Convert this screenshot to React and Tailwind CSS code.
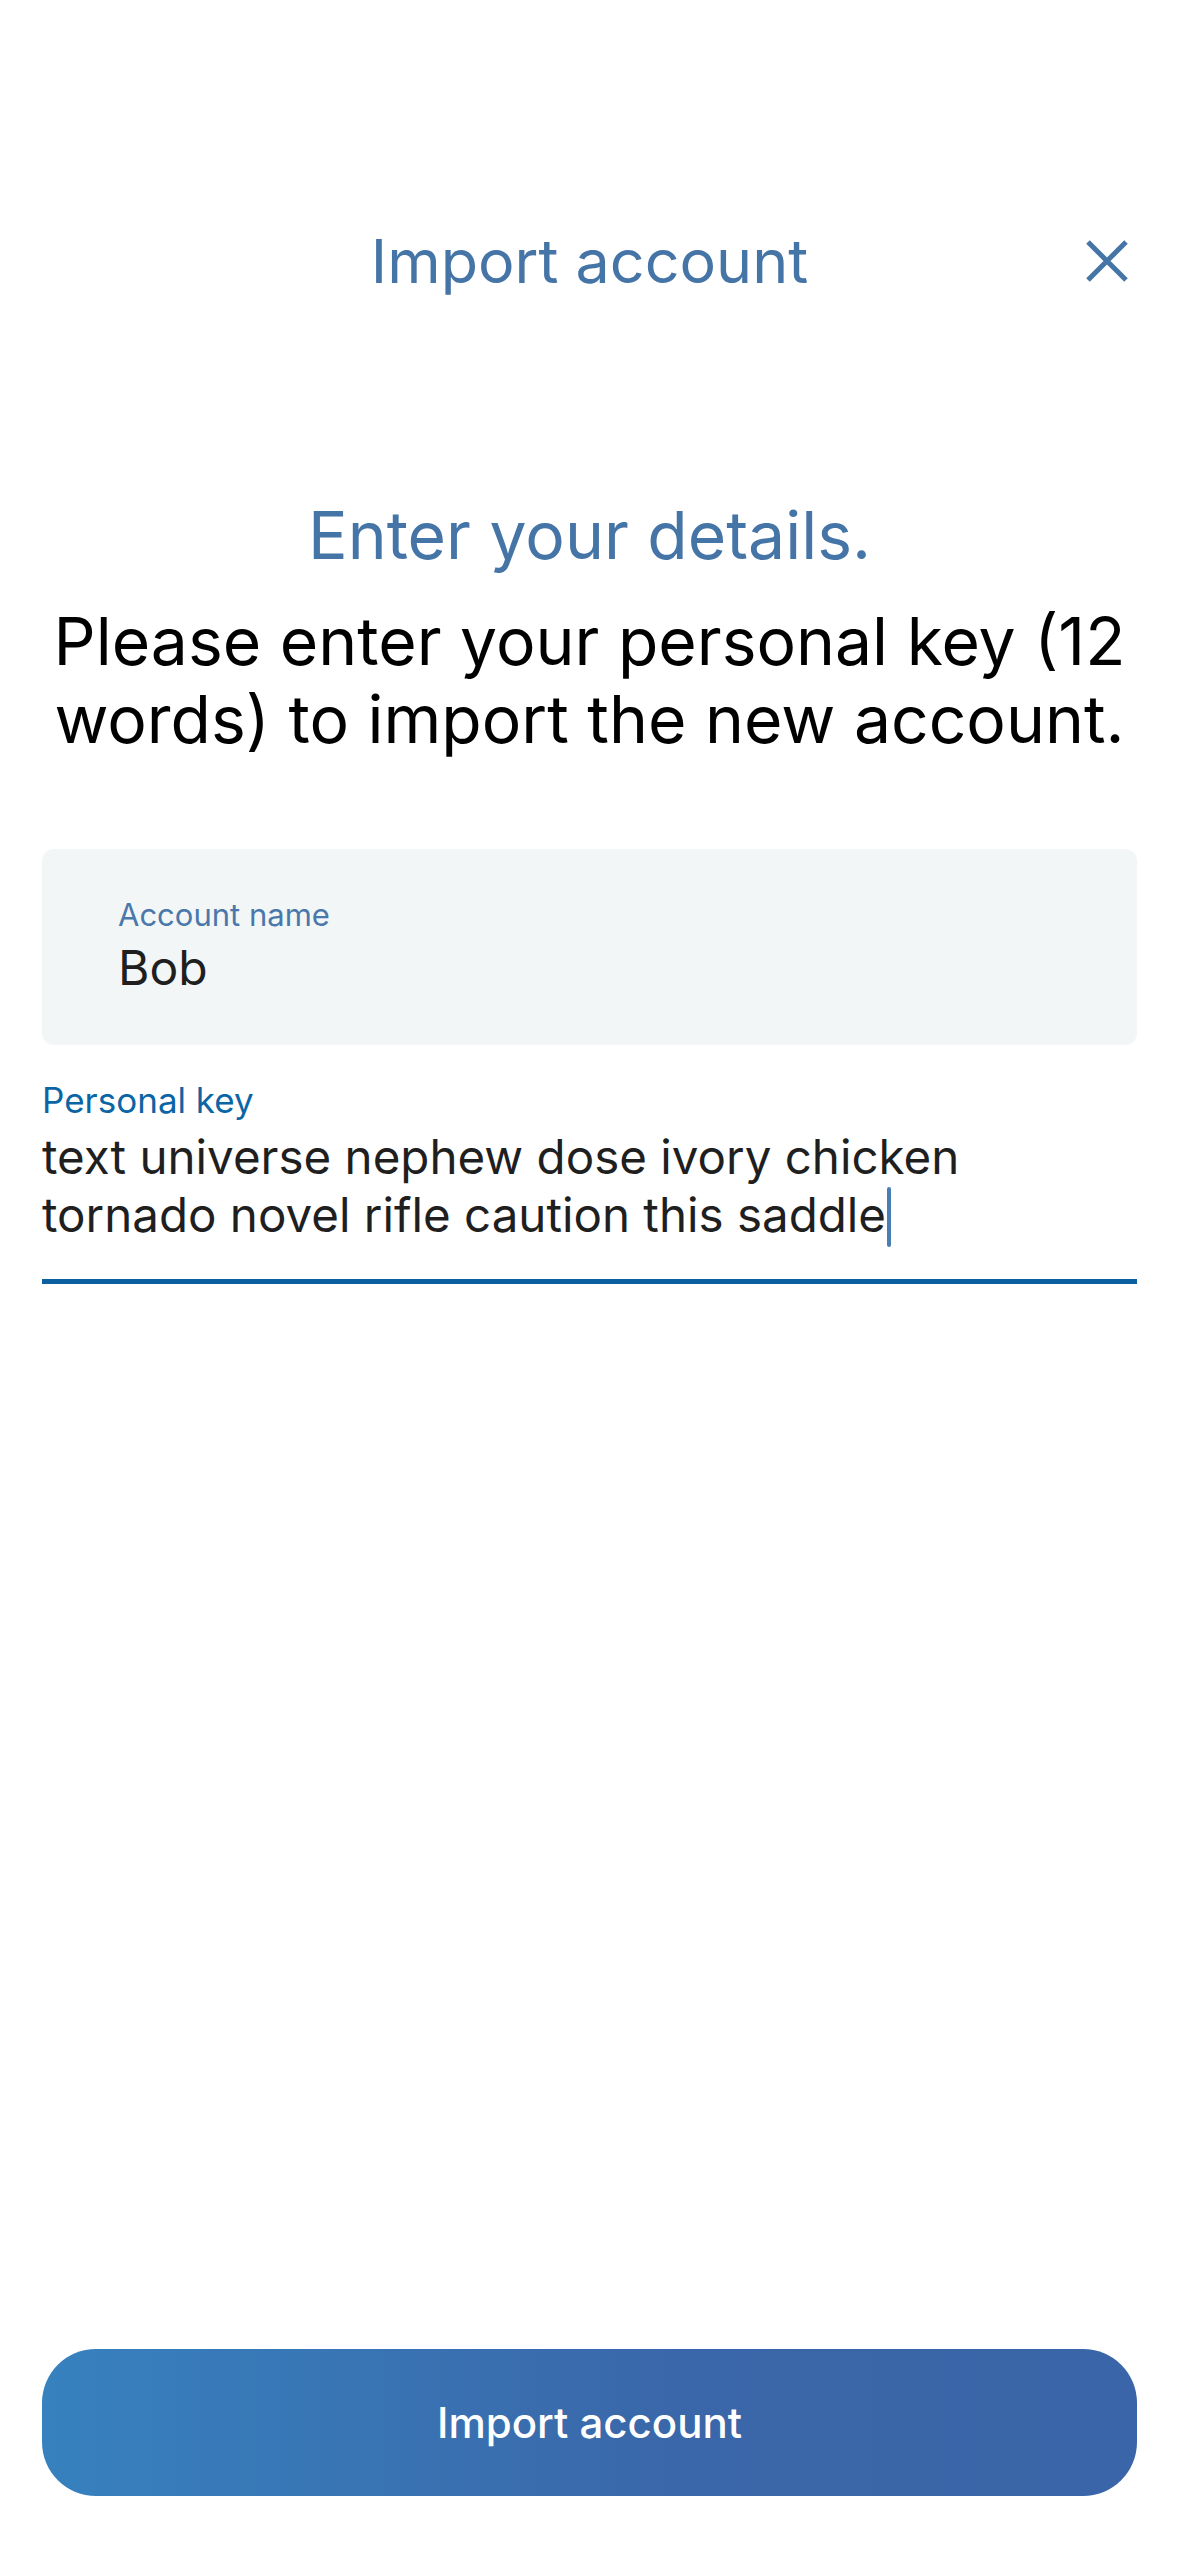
export default function App() {
  return (
    <div
      className="w-[1179px] h-[2556px] bg-white flex flex-col"
      style={{ fontFamily: "Inter, 'Noto Sans', sans-serif" }}
    >
      <div className="mt-[201px] h-[120px] relative flex items-center justify-center">
        <div className="text-[61px] leading-[60px] text-[#4574a6]">Import account</div>
        <div className="absolute right-[50px] top-1/2 -translate-y-1/2 w-[44px] h-[44px] flex items-center justify-center">
          <svg width="44" height="44" viewBox="0 0 44 44">
            <path d="M3 3 L41 41 M41 3 L3 41" stroke="#4574a6" strokeWidth="5" strokeLinecap="butt" />
          </svg>
        </div>
      </div>

      <div className="mt-[182px] text-center text-[66px] leading-[64px] text-[#4574a6]">
        Enter your details.
      </div>
      <div className="mt-[35px] px-[36px] text-center text-[66px] leading-[78px] text-black">
        Please enter your personal key (12 words) to import the new account.
      </div>

      <div className="mt-[91px] mx-[42px] rounded-[12px] bg-[#f3f6f7] pl-[76px] pt-[48px] pb-[49px]">
        <div className="text-[31px] leading-[36px] text-[#4a78aa]">Account name</div>
        <div className="mt-[7px] text-[48px] leading-[56px] text-[#1f1f1f]">Bob</div>
      </div>

      <div className="mx-[42px] mt-[35px]">
        <div className="text-[35px] leading-[40px] text-[#0b65a5]">Personal key</div>
        <div className="mt-[8px] text-[47.5px] leading-[58px] text-[#1f1f1f]">
          text universe nephew dose ivory chicken
          <br />
          tornado novel rifle caution this saddle
          <span className="inline-block align-middle w-[4px] h-[60px] rounded-[2px] bg-[#4a7fb5] ml-[1px] -mt-[4px]"></span>
        </div>
        <div className="mt-[32px] h-[5px] bg-[#0b60a0]"></div>
      </div>

      <div className="mt-auto mb-[60px] mx-[42px] h-[147px] rounded-[54px] bg-[linear-gradient(90deg,#3781bf_0%,#3a67a9_58%,#3a65a8_100%)] flex items-center justify-center">
        <span className="text-white text-[42px] font-medium">Import account</span>
      </div>
    </div>
  );
}
